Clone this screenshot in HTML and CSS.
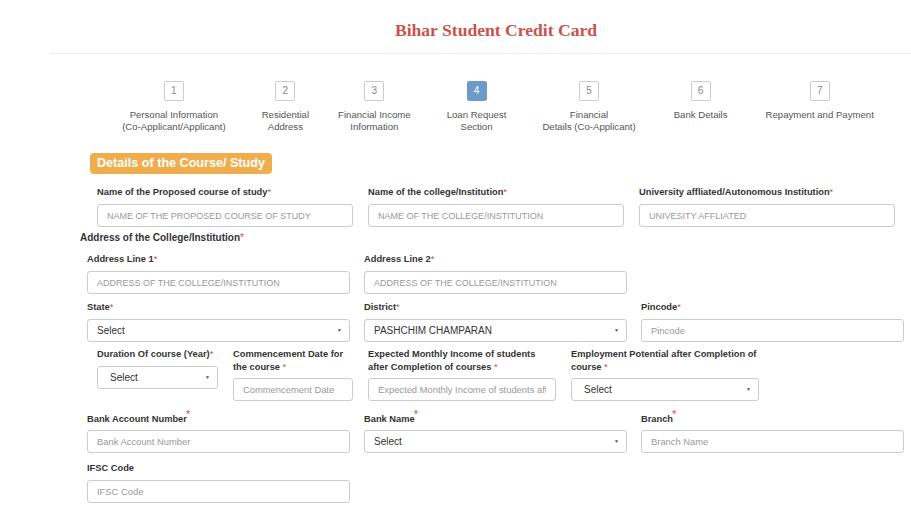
FILE: index.html
```html
<!DOCTYPE html>
<html lang="en">
<head>
  <meta charset="UTF-8">
  <title>Bihar Student Credit Card</title>
  <link rel="stylesheet" href="styles.css">
</head>
<body>
  <div class="page">
    <div class="header">
      <h1>Bihar Student Credit Card</h1>
    </div>

    <div class="steps">
      <div class="step"><span class="num">1</span><span class="step-label">Personal Information<br>(Co-Applicant/Applicant)</span></div>
      <div class="step"><span class="num">2</span><span class="step-label">Residential<br>Address</span></div>
      <div class="step"><span class="num">3</span><span class="step-label">Financial Income<br>Information</span></div>
      <div class="step active"><span class="num">4</span><span class="step-label">Loan Request<br>Section</span></div>
      <div class="step"><span class="num">5</span><span class="step-label">Financial<br>Details (Co-Applicant)</span></div>
      <div class="step"><span class="num">6</span><span class="step-label">Bank Details</span></div>
      <div class="step"><span class="num">7</span><span class="step-label">Repayment and Payment</span></div>
    </div>

    <div class="form">
      <div class="badge">Details of the Course/ Study</div>

      <div class="row row-course">
        <div class="field">
          <label>Name of the Proposed course of study<span class="req">*</span></label>
          <input type="text" class="caps" placeholder="NAME OF THE PROPOSED COURSE OF STUDY">
        </div>
        <div class="field">
          <label>Name of the college/Institution<span class="req">*</span></label>
          <input type="text" class="caps" placeholder="NAME OF THE COLLEGE/INSTITUTION">
        </div>
        <div class="field">
          <label>University affliated/Autonomous Institution<span class="req">*</span></label>
          <input type="text" class="caps" placeholder="UNIVESITY AFFLIATED">
        </div>
      </div>

      <div class="sub-heading">Address of the College/Institution<span class="req">*</span></div>

      <div class="row row-wide row-addr">
        <div class="field">
          <label>Address Line 1<span class="req">*</span></label>
          <input type="text" class="caps" placeholder="ADDRESS OF THE COLLEGE/INSTITUTION">
        </div>
        <div class="field">
          <label>Address Line 2<span class="req">*</span></label>
          <input type="text" class="caps" placeholder="ADDRESS OF THE COLLEGE/INSTITUTION">
        </div>
      </div>

      <div class="row row-wide">
        <div class="field">
          <label>State<span class="req">*</span></label>
          <div class="select-wrap"><select><option>Select</option></select></div>
        </div>
        <div class="field">
          <label>District<span class="req">*</span></label>
          <div class="select-wrap"><select><option>PASHCHIM CHAMPARAN</option></select></div>
        </div>
        <div class="field">
          <label>Pincode<span class="req">*</span></label>
          <input type="text" placeholder="Pincode">
        </div>
      </div>

      <div class="row row-course-info">
        <div class="field f-duration">
          <label>Duration Of course (Year)<span class="req">*</span></label>
          <div class="select-wrap"><select class="wide-pad"><option>Select</option></select></div>
        </div>
        <div class="field f-date">
          <label>Commencement Date for<br>the course <span class="req">*</span></label>
          <input type="text" placeholder="Commencement Date">
        </div>
        <div class="field f-income">
          <label>Expected Monthly Income of students<br>after Completion of courses <span class="req">*</span></label>
          <input type="text" placeholder="Expected Monthly Income of students after Completion of courses">
        </div>
        <div class="field f-income">
          <label>Employment Potential after Completion of<br>course <span class="req">*</span></label>
          <div class="select-wrap"><select class="wide-pad"><option>Select</option></select></div>
        </div>
      </div>

      <div class="row row-wide row-bank">
        <div class="field">
          <label>Bank Account Number<sup class="req">*</sup></label>
          <input type="text" placeholder="Bank Account Number">
        </div>
        <div class="field">
          <label>Bank Name<sup class="req">*</sup></label>
          <div class="select-wrap"><select><option>Select</option></select></div>
        </div>
        <div class="field">
          <label>Branch<sup class="req">*</sup></label>
          <input type="text" placeholder="Branch Name">
        </div>
      </div>

      <div class="row row-wide row-ifsc">
        <div class="field">
          <label>IFSC Code</label>
          <input type="text" placeholder="IFSC Code">
        </div>
      </div>
    </div>
  </div>
</body>
</html>
```

FILE: styles.css
```css
html, body {
  margin: 0;
  overflow: hidden;
  background: #fff;
}
body {
  font-family: "Liberation Sans", Arial, sans-serif;
  color: #333;
}
.page {
  width: 892px;
  margin-left: 50px;
}
.header {
  border-bottom: 1px solid #eee;
  height: 54px;
  box-sizing: border-box;
  padding-top: 18px;
}
h1 {
  margin: 0;
  font-family: "Liberation Serif", "Times New Roman", serif;
  font-size: 17.6px;
  line-height: 24px;
  font-weight: bold;
  color: #c9534c;
  text-align: center;
}

/* wizard steps */
.steps {
  display: flex;
  justify-content: center;
  margin-top: 27px;
  padding-left: 4px;
}
.step {
  display: flex;
  flex-direction: column;
  align-items: center;
  padding: 0 18px;
}
.step:nth-child(2) {
  padding-right: 11px;
}
.step:nth-child(5),
.step:nth-child(6) {
  padding-right: 20px;
}
.num {
  width: 18px;
  height: 18px;
  border: 1px solid #ccc;
  border-radius: 2px;
  font-size: 10px;
  line-height: 18px;
  text-align: center;
  color: #888;
}
.step.active .num {
  background: #6d9bc9;
  border-color: #6d9bc9;
  color: #fff;
}
.step-label {
  margin-top: 8px;
  font-size: 9.6px;
  line-height: 12px;
  color: #555;
  text-align: center;
}

/* form */
.form {
  padding-left: 30px;
  margin-top: 20px;
}
.badge {
  display: inline-block;
  margin-left: 10px;
  background: #f0ad4e;
  color: #fff;
  font-weight: bold;
  font-size: 12.6px;
  line-height: 21px;
  padding: 0 7px;
  border-radius: 4px;
}
.row {
  display: flex;
  gap: 15px;
}
.field {
  display: flex;
  flex-direction: column;
}
label {
  display: block;
  font-size: 9.3px;
  line-height: 12px;
  font-weight: bold;
  color: #333;
  margin-bottom: 6px;
}
.req {
  color: #e0483e;
  font-weight: normal;
}
sup.req {
  font-size: 11px;
  line-height: 0;
  vertical-align: 4px;
  margin-left: -1px;
}
input, select {
  box-sizing: border-box;
  height: 23px;
  border: 1px solid #ccc;
  border-radius: 3px;
  font-family: "Liberation Sans", Arial, sans-serif;
  font-size: 9.4px;
  padding: 0 9px;
  color: #333;
  background: #fff;
  width: 100%;
  margin: 0;
}
input.caps {
  font-size: 9px;
}
input::placeholder {
  color: #999;
}
select {
  appearance: none;
  -webkit-appearance: none;
  padding-right: 20px;
  font-size: 10px;
}
select.wide-pad {
  padding-left: 12px;
}
.select-wrap {
  position: relative;
}
.select-wrap::after {
  content: "▼";
  position: absolute;
  right: 8px;
  top: 8px;
  font-size: 5px;
  color: #555;
  pointer-events: none;
}

.row-course {
  margin-top: 12px;
  padding-left: 17px;
}
.row-course .field {
  width: 256px;
}
.sub-heading {
  font-size: 10px;
  font-weight: bold;
  line-height: 14px;
  margin-top: 4px;
}
.row-wide {
  padding-left: 7px;
  gap: 14px;
  margin-top: 7px;
}
.row-wide .field {
  width: 263px;
}
.row-wide.row-addr {
  margin-top: 8px;
}
.row-addr + .row-wide {
  margin-top: 7px;
}
.row-course-info {
  padding-left: 17px;
  margin-top: 6px;
}
.f-duration { width: 121px; }
.f-date { width: 120px; }
.f-income { width: 188px; }
.row-course-info label {
  line-height: 13px;
  min-height: 26px;
  margin-bottom: 4px;
}
.row-course-info .f-duration label {
  min-height: 13px;
  margin-bottom: 5px;
}
.row-wide.row-bank {
  margin-top: 12px;
}
.row-bank label {
  margin-bottom: 5px;
}
.row-wide.row-ifsc {
  margin-top: 9px;
}
```
